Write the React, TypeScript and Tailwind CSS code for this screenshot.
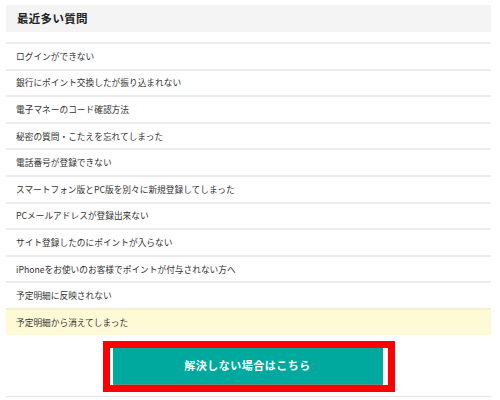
import React from 'react';

const questions = [
  'ログインができない',
  '銀行にポイント交換したが振り込まれない',
  '電子マネーのコード確認方法',
  '秘密の質問・こたえを忘れてしまった',
  '電話番号が登録できない',
  'スマートフォン版とPC版を別々に新規登録してしまった',
  'PCメールアドレスが登録出来ない',
  'サイト登録したのにポイントが入らない',
  'iPhoneをお使いのお客様でポイントが付与されない方へ',
  '予定明細に反映されない',
  '予定明細から消えてしまった',
];

const font = { fontFamily: '"Noto Sans CJK JP", "Noto Sans", sans-serif' };

const App: React.FC = () => {
  return (
    <div className="w-[500px] h-[400px] bg-white overflow-hidden" style={font}>
      <div className="mx-[6px] w-[485px] pt-[5px]">
        <div className="h-[27px] bg-[#f4f4f4] flex items-center pl-[11px]">
          <h2 className="text-[11.5px] font-bold text-[#222] tracking-[0.3px]">最近多い質問</h2>
        </div>
        <ul className="mt-[10px]">
          {questions.map((q, i) => {
            const last = i === questions.length - 1;
            return (
              <li
                key={q}
                className={
                  'h-[26.6px] flex items-center pl-[10px] border-t-2 border-[#ececec] text-[8.7px] text-[#333] ' +
                  (last ? 'bg-[#fffad6] border-[#f3efcf]' : '')
                }
              >
                {q}
              </li>
            );
          })}
        </ul>
        <div className="pt-[6px] pb-[4px] border-b border-[#e6e6e6]">
          <div className="mx-auto w-[292px] border-[7px] border-[#ff0000] bg-white pl-[3px] pr-[5px]">
            <a
              href="#"
              className="h-[37px] flex items-center justify-center bg-[#00a99d] border-b border-[#6f8a7a] text-white text-[11px] font-bold tracking-[0.5px]"
            >
              解決しない場合はこちら
            </a>
          </div>
        </div>
      </div>
    </div>
  );
};

export default App;
